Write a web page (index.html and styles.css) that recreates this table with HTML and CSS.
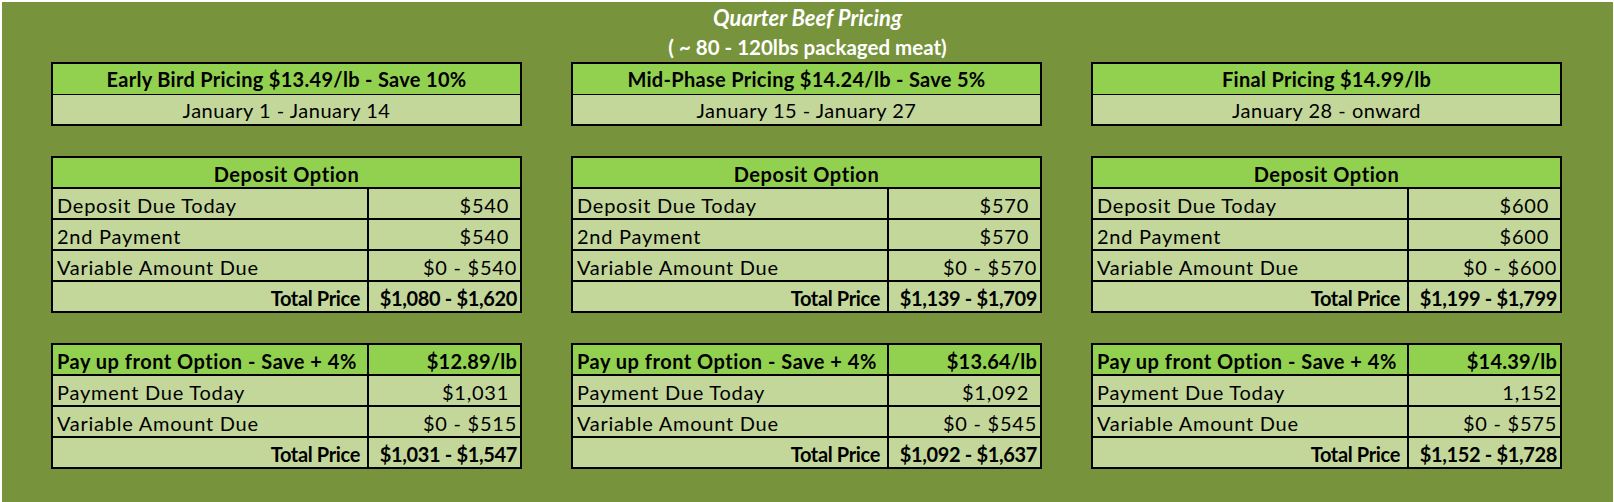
FILE: index.html
```html
<!DOCTYPE html>
<html>
<head>
<meta charset="utf-8">
<link rel="stylesheet" href="styles.css">
</head>
<body>
<div class="sheet">
  <div class="title">
    <div class="t1">Quarter Beef Pricing</div>
    <div class="t2">( ~ 80 - 120lbs packaged meat)</div>
  </div>
  <div class="cols">
    <div class="col">
      <div class="phase">
        <div class="phase-head">Early Bird Pricing $13.49/lb - Save 10%</div>
        <div class="phase-date">January 1 - January 14</div>
      </div>
      <div class="tbl">
        <div class="c head span">Deposit Option</div>
        <div class="c">Deposit Due Today</div><div class="c v sp">$540</div>
        <div class="c">2nd Payment</div><div class="c v sp">$540</div>
        <div class="c">Variable Amount Due</div><div class="c v">$0 - $540</div>
        <div class="c b r">Total Price</div><div class="c v b">$1,080 - $1,620</div>
      </div>
      <div class="tbl">
        <div class="c head wide">Pay up front Option - Save + 4%</div><div class="c head v price">$12.89/lb</div>
        <div class="c">Payment Due Today</div><div class="c v sp">$1,031</div>
        <div class="c">Variable Amount Due</div><div class="c v">$0 - $515</div>
        <div class="c b r">Total Price</div><div class="c v b">$1,031 - $1,547</div>
      </div>
    </div>
    <div class="col">
      <div class="phase">
        <div class="phase-head">Mid-Phase Pricing $14.24/lb - Save 5%</div>
        <div class="phase-date">January 15 - January 27</div>
      </div>
      <div class="tbl">
        <div class="c head span">Deposit Option</div>
        <div class="c">Deposit Due Today</div><div class="c v sp">$570</div>
        <div class="c">2nd Payment</div><div class="c v sp">$570</div>
        <div class="c">Variable Amount Due</div><div class="c v">$0 - $570</div>
        <div class="c b r">Total Price</div><div class="c v b">$1,139 - $1,709</div>
      </div>
      <div class="tbl">
        <div class="c head wide">Pay up front Option - Save + 4%</div><div class="c head v price">$13.64/lb</div>
        <div class="c">Payment Due Today</div><div class="c v sp">$1,092</div>
        <div class="c">Variable Amount Due</div><div class="c v">$0 - $545</div>
        <div class="c b r">Total Price</div><div class="c v b">$1,092 - $1,637</div>
      </div>
    </div>
    <div class="col">
      <div class="phase">
        <div class="phase-head">Final Pricing $14.99/lb</div>
        <div class="phase-date">January 28 - onward</div>
      </div>
      <div class="tbl">
        <div class="c head span">Deposit Option</div>
        <div class="c">Deposit Due Today</div><div class="c v sp">$600</div>
        <div class="c">2nd Payment</div><div class="c v sp">$600</div>
        <div class="c">Variable Amount Due</div><div class="c v">$0 - $600</div>
        <div class="c b r">Total Price</div><div class="c v b">$1,199 - $1,799</div>
      </div>
      <div class="tbl">
        <div class="c head wide">Pay up front Option - Save + 4%</div><div class="c head v price">$14.39/lb</div>
        <div class="c">Payment Due Today</div><div class="c v">1,152</div>
        <div class="c">Variable Amount Due</div><div class="c v">$0 - $575</div>
        <div class="c b r">Total Price</div><div class="c v b">$1,152 - $1,728</div>
      </div>
    </div>
  </div>
</div>
</body>
</html>
```
FILE: styles.css
```css
html, body {
  margin: 0;
  padding: 0;
  background: #ffffff;
}
body {
  font-family: "Lato", "Liberation Sans", sans-serif;
  color: #000;
}
.sheet {
  margin: 2px 1px 0 2px;
  height: 500px;
  background: #77933c;
  box-sizing: border-box;
}
.title {
  text-align: center;
  color: #ffffff;
  font-weight: bold;
}
.t1, .t2 {
  height: 30px;
  line-height: 30px;
}
.t1 {
  font-style: italic;
  font-size: 22px;
  padding-top: 1px;
  height: 29px;
}
.t2 {
  font-size: 20.5px;
}
.cols {
  display: flex;
  gap: 49px;
  padding-left: 49px;
}
.col {
  width: 471px;
  display: flex;
  flex-direction: column;
  gap: 30px;
}
.phase {
  border: 2px solid #000;
  font-size: 20px;
}
.phase-head {
  height: 30px;
  line-height: 31px;
  background: #92d050;
  font-weight: bold;
  letter-spacing: 0.3px;
  text-align: center;
  border-bottom: 1px solid #000;
}
.phase-date {
  height: 29px;
  line-height: 30px;
  background: #c4d79b;
  text-align: center;
  letter-spacing: 0.5px;
}
.tbl {
  display: grid;
  grid-template-columns: 314px 1fr;
  grid-auto-rows: 29px;
  gap: 2px;
  padding: 2px;
  background: #000;
  font-size: 20px;
}
.c {
  background: #c4d79b;
  display: flex;
  align-items: center;
  padding: 2px 4px 0 4px;
  white-space: nowrap;
  letter-spacing: 0.75px;
}
.head {
  background: #92d050;
  font-weight: bold;
}
.span {
  grid-column: 1 / span 2;
  justify-content: center;
  letter-spacing: 0.6px;
}
.v {
  justify-content: flex-end;
  padding-right: 3px;
}
.sp {
  padding-right: 11px;
}
.b {
  font-weight: bold;
  letter-spacing: -0.35px;
}
.wide {
  letter-spacing: 0.5px;
}
.price {
  letter-spacing: 0.2px;
}
.r {
  justify-content: flex-end;
  padding-right: 7px;
}
```
